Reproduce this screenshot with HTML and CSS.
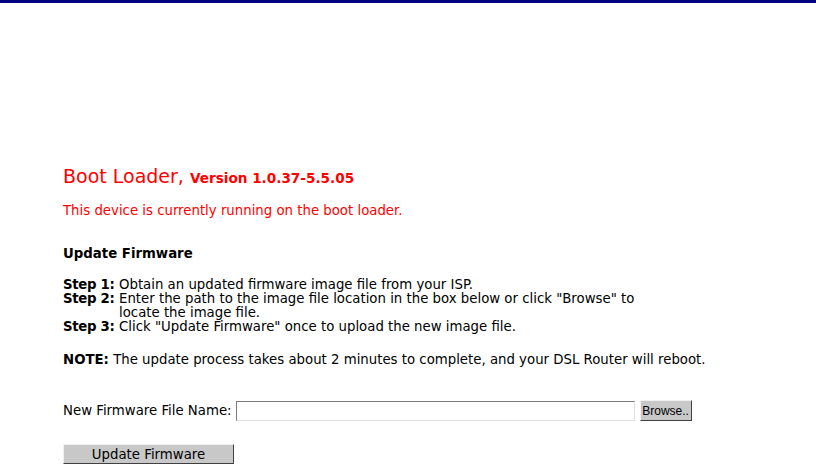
FILE: index.html
```html
<!DOCTYPE html>
<html lang="en">
<head>
  <meta charset="UTF-8">
  <title>Boot Loader</title>
  <link rel="stylesheet" href="styles.css">
</head>
<body>
  <div class="topbar"></div>

  <div class="content">
    <div class="title">Boot Loader, <span class="version">Version 1.0.37-5.5.05</span></div>
    <p class="warn">This device is currently running on the boot loader.</p>

    <p class="heading">Update Firmware</p>

    <table class="steps">
      <tr>
        <td class="step-label">Step 1:</td>
        <td>Obtain an updated firmware image file from your ISP.</td>
      </tr>
      <tr>
        <td class="step-label">Step 2:</td>
        <td>Enter the path to the image file location in the box below or click "Browse" to<br>locate the image file.</td>
      </tr>
      <tr>
        <td class="step-label">Step 3:</td>
        <td>Click "Update Firmware" once to upload the new image file.</td>
      </tr>
    </table>

    <p class="note"><b>NOTE:</b> The update process takes about 2 minutes to complete, and your DSL Router will reboot.</p>

    <form class="upload-form">
      <div class="file-row">
        <label for="filename">New Firmware File Name:</label>
        <input type="text" id="filename" class="file-input">
        <button type="button" class="btn-browse">Browse..</button>
      </div>
      <button type="button" class="btn-update">Update Firmware</button>
    </form>
  </div>
</body>
</html>
```

FILE: styles.css
```css
body {
    margin: 0;
    font-family: "DejaVu Sans", Verdana, sans-serif;
    font-size: 13.3px;
    color: #000;
    background: #fff;
}
.topbar {
    height: 3px;
    background-color: #000080;
}
.content {
    padding: 161px 0 0 63px;
}
.title {
    color: #ff0000;
    font-size: 19px;
    line-height: 24px;
}
.version {
    font-size: 13.6px;
    font-weight: bold;
}
.warn {
    color: #ff0000;
    margin: 14px 0 0;
    line-height: 14px;
}
.heading {
    font-weight: bold;
    margin: 29px 0 0;
    line-height: 14px;
}
.steps {
    border-collapse: collapse;
    margin-top: 17px;
}
.steps td {
    padding: 0;
    line-height: 14px;
    vertical-align: top;
    font-size: 13.3px;
    white-space: nowrap;
}
.step-label {
    font-weight: bold;
    width: 56px;
    letter-spacing: -0.3px;
}
.note {
    margin: 19px 0 0;
    line-height: 14px;
}
.upload-form {
    margin-top: 33px;
}
.file-row {
    display: flex;
    align-items: center;
    gap: 4px;
}
.file-input {
    width: 399px;
    height: 20px;
    box-sizing: border-box;
    border: 1px solid #7a7a7a;
    border-right-color: #e0e0e0;
    border-bottom-color: #e0e0e0;
    margin: 0;
    padding: 1px 2px;
    font-family: inherit;
    font-size: 12px;
}
.btn-browse {
    margin-left: 1px;
    height: 21px;
    width: 52px;
    padding: 0;
    background: #c8c8c8;
    border: 1px solid;
    border-color: #f0f0f0 #404040 #404040 #f0f0f0;
    font-family: "Liberation Sans", Arial, sans-serif;
    font-size: 12px;
    color: #000;
}
.btn-update {
    display: block;
    margin-top: 23px;
    width: 171px;
    height: 20px;
    padding: 0;
    background: #c8c8c8;
    border: 1px solid;
    border-color: #f0f0f0 #404040 #404040 #f0f0f0;
    font-family: inherit;
    font-size: 13.3px;
    color: #000;
}
```
